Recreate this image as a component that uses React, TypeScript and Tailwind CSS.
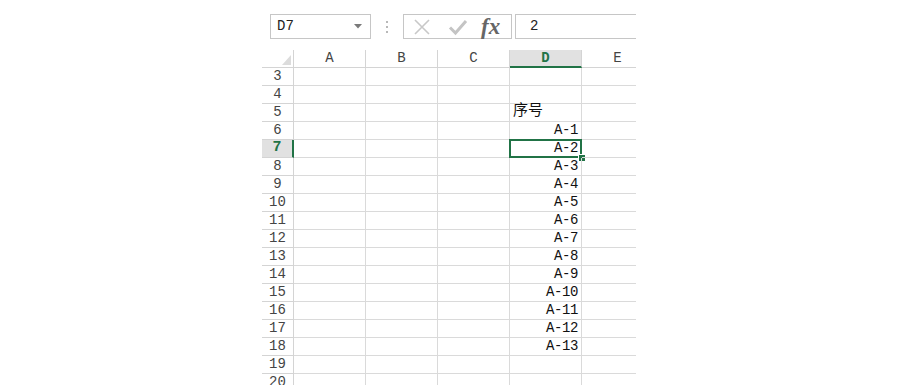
import React from "react";

const cols = ["A", "B", "C", "D", "E"];
const rows = Array.from({ length: 18 }, (_, i) => i + 3);

function cellValue(row: number, col: string) {
  if (col !== "D") return "";
  if (row === 5) return "序号";
  if (row >= 6 && row <= 18) return `A-${row - 5}`;
  return "";
}

export default function App() {
  return (
    <div
      className="w-[900px] h-[385px] bg-white overflow-hidden text-[#333]"
      style={{ fontFamily: "'Liberation Mono', 'Noto Sans CJK SC', monospace" }}
    >
      <div className="ml-[262px] w-[374px] h-full overflow-hidden flex flex-col">
        {/* ribbon edge */}
        <div className="mt-[3px] ml-px h-px bg-[#d0d0d0]" />

        {/* formula bar */}
        <div className="mt-[11px] flex items-center h-[25px]">
          <div className="ml-[8px] w-[101px] h-[25px] border border-[#c6c6c6] flex items-center justify-between pl-[6px] pr-[8px]">
            <span className="text-[14px] text-[#222]">D7</span>
            <svg width="8" height="5" viewBox="0 0 8 5">
              <path d="M0 0h8L4 4.5z" fill="#7a7a7a" />
            </svg>
          </div>
          <div className="w-[32px] flex flex-col items-center gap-[3px]">
            <span className="w-[2px] h-[2px] bg-[#b8b8b8]" />
            <span className="w-[2px] h-[2px] bg-[#b8b8b8]" />
            <span className="w-[2px] h-[2px] bg-[#b8b8b8]" />
          </div>
          <div className="w-[109px] h-[25px] border border-[#c6c6c6] flex items-center pl-[9px]">
            <svg width="18" height="18" viewBox="0 0 18 18">
              <path d="M2 2L16 16M16 2L2 16" stroke="#c8c8c8" strokeWidth="1.6" />
            </svg>
            <svg width="20" height="18" viewBox="0 0 20 18" className="ml-[17px]">
              <path d="M2 9.5L7.5 15L18 3" stroke="#c4c4c4" strokeWidth="3" fill="none" />
            </svg>
            <span
              className="ml-[13px] text-[23px] italic font-bold text-[#666] leading-none"
              style={{ fontFamily: "'Liberation Serif', serif" }}
            >
              fx
            </span>
          </div>
          <div className="ml-[3px] flex-1 h-[25px] border border-r-0 border-[#c6c6c6] flex items-center pl-[14px]">
            <span className="text-[14px] text-[#222]">2</span>
          </div>
        </div>

        {/* grid */}
        <div className="mt-[11px] grid grid-cols-[32px_72px_72px_72px_72px_72px]">
          {/* header row */}
          <div className="h-[18px] border-r border-b border-[#d4d4d4] flex items-end justify-end pr-[2px] pb-[2px]">
            <svg width="9" height="10" viewBox="0 0 9 10">
              <path d="M9 0V10H0z" fill="#dcdcdc" />
            </svg>
          </div>
          {cols.map((c) =>
            c === "D" ? (
              <div
                key={c}
                className="h-[18px] bg-[#e1e1e1] border-r border-[#d4d4d4] border-b-2 border-b-[#217346] flex items-center justify-center text-[14px] font-bold text-[#217346]"
              >
                {c}
              </div>
            ) : (
              <div
                key={c}
                className="h-[18px] border-r border-b border-[#d4d4d4] flex items-center justify-center text-[14px] text-[#444]"
              >
                {c}
              </div>
            )
          )}

          {rows.map((r) => (
            <React.Fragment key={r}>
              {r === 7 ? (
                <div className="h-[18px] bg-[#e1e1e1] border-r-2 border-r-[#217346] border-b border-[#d4d4d4] flex items-center justify-center text-[15px] font-bold text-[#217346]">
                  {r}
                </div>
              ) : (
                <div className="h-[18px] border-r border-b border-[#d4d4d4] flex items-center justify-center text-[14px] text-[#444]">
                  {r}
                </div>
              )}
              {cols.map((c) => {
                const v = cellValue(r, c);
                const active = r === 7 && c === "D";
                return (
                  <div
                    key={c}
                    className={`relative h-[18px] border-r border-b border-[#dadada] flex items-center ${
                      r === 5 ? "justify-start pl-[3px]" : "justify-end pr-[3px]"
                    } ${r === 5 ? "text-[15px]" : "text-[14px] tracking-[-0.4px]"} text-[#111]`}
                  >
                    {v}
                    {active && (
                      <>
                        <div className="absolute -left-px -top-px -right-px -bottom-px border-2 border-[#217346]" />
                        <div className="absolute -right-[4px] -bottom-[4px] w-[7px] h-[7px] bg-[#217346] border-l border-t border-white" />
                      </>
                    )}
                  </div>
                );
              })}
            </React.Fragment>
          ))}
        </div>
      </div>
    </div>
  );
}
